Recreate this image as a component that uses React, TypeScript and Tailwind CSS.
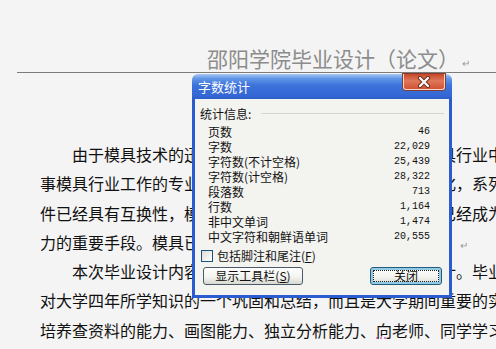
const cjk = "font-['Noto_Sans_CJK_SC','Noto_Sans',sans-serif]";

type Stat = { label: string; value: string };

const stats: Stat[] = [
  { label: "页数", value: "46" },
  { label: "字数", value: "22,029" },
  { label: "字符数(不计空格)", value: "25,439" },
  { label: "字符数(计空格)", value: "28,322" },
  { label: "段落数", value: "713" },
  { label: "行数", value: "1,164" },
  { label: "非中文单词", value: "1,474" },
  { label: "中文字符和朝鲜语单词", value: "20,555" },
];

function ReturnMark({ className = "" }: { className?: string }) {
  return (
    <span className={`text-[10px] leading-none text-[#9a9a9a] ${className}`}>↵</span>
  );
}

function WordCountDialog() {
  return (
    <div className={`absolute left-[192px] top-[74px] w-[260px] ${cjk}`}>
      {/* title bar */}
      <div className="relative h-[25px] rounded-t-[6px] bg-[linear-gradient(to_bottom,#a9c8f3_0%,#6196e6_18%,#3d72da_45%,#3468d5_85%,#2b5dcb_100%)] pl-[6px] pt-[5px] text-[13px] leading-[15px] text-white">
        字数统计
        <div className="absolute left-[211px] top-0 flex h-[16px] w-[42px] items-center justify-center rounded-b-[3px] border border-t-0 border-[#f3d6cc] bg-[linear-gradient(to_bottom,#c2482a_0%,#e0765a_45%,#cf5334_100%)] shadow-[0_0_0_1px_#8a3a2a]">
          <svg width="14" height="12" viewBox="0 0 14 12">
            <path d="M3 2 L11 10 M11 2 L3 10" stroke="#6b2a1c" strokeWidth="4" strokeLinecap="round" />
            <path d="M3 2 L11 10 M11 2 L3 10" stroke="#ffffff" strokeWidth="2.2" strokeLinecap="round" />
          </svg>
        </div>
      </div>

      {/* body */}
      <div className="flex h-[199px] flex-col border-x-[3px] border-b-[3px] border-[#2a5bcf] bg-[#f3f3f0] text-[12px] text-[#111]">
        <div className="mt-[7px] flex h-[15px] items-center pl-[5px] leading-[15px]">
          <span>统计信息:</span>
          <div className="ml-[10px] mr-[5px] h-px flex-1 bg-[#d6d6cc]" />
        </div>

        <div className="mt-[3px] flex flex-col pl-[13px] pr-[19px]">
          {stats.map((s) => (
            <div key={s.label} className="flex h-[15px] items-center justify-between leading-[15px]">
              <span>{s.label}</span>
              <span className="font-['Liberation_Mono',monospace] text-[10px]">{s.value}</span>
            </div>
          ))}
        </div>

        <div className="mt-[4px] flex h-[15px] items-center pl-[6px] leading-[15px]">
          <div className="h-[12px] w-[12px] border border-[#1c5180] bg-[linear-gradient(to_bottom_right,#dcdcd6,#ffffff)]" />
          <span className="ml-[4px]">
            包括脚注和尾注(<span className="underline">F</span>)
          </span>
        </div>

        <div className="mt-[4px] flex pl-[8px]">
          <button
            type="button"
            className="flex h-[18px] w-[100px] items-center justify-center rounded-[3px] border border-[#4a5a6a] bg-[linear-gradient(to_bottom,#ffffff_0%,#f2f2ee_60%,#d8d8d0_100%)] text-[12px] leading-none"
          >
            显示工具栏(<span className="underline">S</span>)
          </button>
          <button
            type="button"
            className="ml-[67px] flex h-[18px] w-[72px] items-center justify-center rounded-[3px] border border-[#245a7a] bg-[linear-gradient(to_bottom,#ffffff_0%,#f2f2ee_60%,#d8d8d0_100%)] p-[2px] text-[12px] leading-none shadow-[inset_0_0_0_2px_#8fcbe6]"
          >
            <span className="flex h-full w-full items-center justify-center border border-dotted border-[#222]">
              关闭
            </span>
          </button>
        </div>
      </div>
    </div>
  );
}

export default function App() {
  return (
    <div className={`relative h-[349px] w-[496px] overflow-hidden bg-[#f4f4f4] ${cjk}`}>
      <div className="ml-[17px] h-[73px] whitespace-nowrap border-b border-[#7c7c7c] pl-[190px] pt-[47px]">
        <span className="text-[21px] leading-[22px] text-[#8c8c8c]">邵阳学院毕业设计（论文）</span>
        <ReturnMark className="ml-[3px]" />
      </div>

      <div className="whitespace-nowrap pl-[40px] pt-[67px] text-[16px] leading-[29.3px] text-[#111]">
        <div className="pl-[32px]">由于模具技术的迅速发展，越来越多的人开始进入模具行业中</div>
        <div>事模具行业工作的专业人员日益增多，模具零件逐步标准化，系列</div>
        <div>件已经具有互换性，模具的设计与制造技术水平的高低也已经成为</div>
        <div>
          力的重要手段。模具已成为现代工业生产的重要工艺装备。
          <ReturnMark className="ml-[4px]" />
        </div>
        <div className="pl-[32px]">本次毕业设计内容为电器外壳塑料零件的注射模具设计。毕业</div>
        <div>对大学四年所学知识的一个巩固和总结，而且是大学期间重要的实</div>
        <div>
          培养查资料的能力、画图能力、独立分析能力、
          <span className="underline decoration-dotted decoration-[#d070c0]">向</span>
          老师、同学学习
        </div>
      </div>

      <WordCountDialog />
    </div>
  );
}
